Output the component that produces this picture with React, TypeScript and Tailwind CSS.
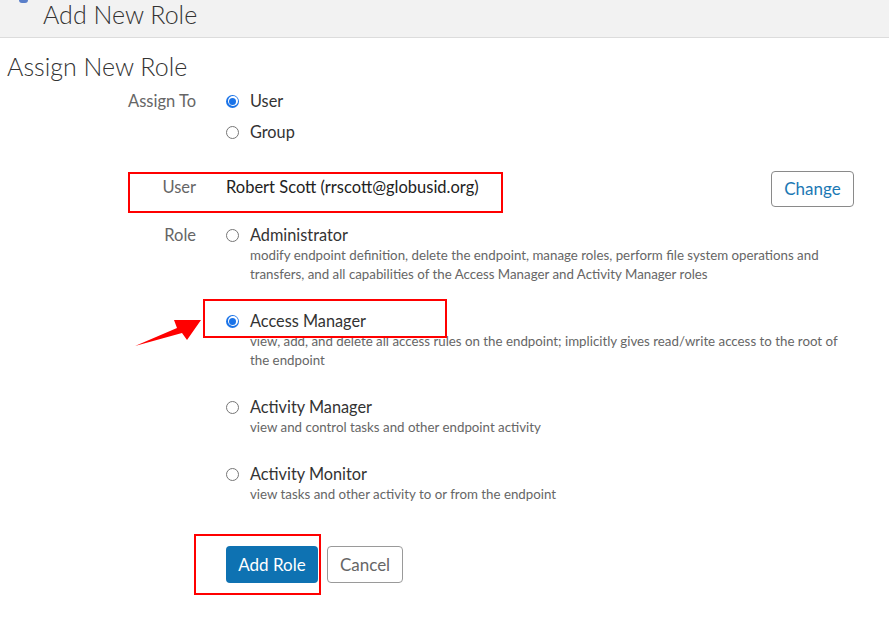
import React from "react";

const font = { fontFamily: "Lato, 'Open Sans', Arial, sans-serif" };

function Radio({ checked }: { checked?: boolean }) {
  if (checked) {
    return (
      <span className="flex h-[13px] w-[13px] shrink-0 items-center justify-center rounded-full bg-[#1a73e8]">
        <span className="flex h-[10px] w-[10px] items-center justify-center rounded-full bg-white">
          <span className="h-[7px] w-[7px] rounded-full bg-[#1a73e8]" />
        </span>
      </span>
    );
  }
  return <span className="h-[13px] w-[13px] shrink-0 rounded-full border border-[#767676] bg-white" />;
}

function RoleItem({
  title,
  desc,
  checked,
  children,
}: {
  title: string;
  desc: string;
  checked?: boolean;
  children?: React.ReactNode;
}) {
  return (
    <div className="relative">
      {children}
      <div className="flex h-[20px] items-center gap-[11px]">
        <Radio checked={checked} />
        <span className="text-[16.3px] leading-[20px] text-[#333]">{title}</span>
      </div>
      <p className="mt-[1px] pl-[24px] text-[13.3px] leading-[19px] text-[#666]">{desc}</p>
    </div>
  );
}

export default function App() {
  return (
    <div className="min-h-[618px] w-full bg-white" style={font}>
      <div className="flex h-[38px] items-start border-b border-[#dcdcdc] bg-[#f2f2f2] pl-[19px]">
        <span className="h-[3px] w-[9px] rounded-b-full bg-[#5a7fc9]" />
        <span className="ml-[15px] text-[25px] leading-[28px] font-light text-[#333]">Add New Role</span>
      </div>

      <h2 className="mt-[14px] pl-[7px] text-[25px] leading-[28px] font-light text-[#333]">Assign New Role</h2>

      <div className="mt-[11px] flex flex-col pr-[35px]">
        <div className="flex">
          <div className="w-[196px] text-right text-[16.5px] leading-[20px] text-[#666]">Assign To</div>
          <div className="ml-[30px] flex flex-col gap-[11px]">
            <div className="flex h-[20px] items-center gap-[11px]">
              <Radio checked />
              <span className="text-[16.3px] text-[#333]">User</span>
            </div>
            <div className="flex h-[20px] items-center gap-[11px]">
              <Radio />
              <span className="text-[16.3px] text-[#333]">Group</span>
            </div>
          </div>
        </div>

        <div className="relative mt-[29px] flex">
          <div className="pointer-events-none absolute left-[128px] top-[1px] h-[41px] w-[375px] border-2 border-[#ff0000]" />
          <div className="w-[196px] pt-[6px] text-right text-[16.5px] leading-[20px] text-[#666]">User</div>
          <div className="ml-[30px] flex flex-1 items-start justify-between">
            <span className="pt-[6px] text-[16.5px] leading-[20px] text-[#222]">Robert Scott (rrscott@globusid.org)</span>
            <button className="h-[36px] w-[83px] rounded-[4px] border border-[#8a8a8a] bg-white text-[17px] text-[#1b78b4]">
              Change
            </button>
          </div>
        </div>

        <div className="mt-[18px] flex">
          <div className="w-[196px] text-right text-[16.5px] leading-[20px] text-[#666]">Role</div>
          <div className="ml-[30px] flex flex-1 flex-col gap-[27px]">
            <RoleItem
              title="Administrator"
              desc="modify endpoint definition, delete the endpoint, manage roles, perform file system operations and transfers, and all capabilities of the Access Manager and Activity Manager roles"
            />
            <RoleItem
              checked
              title="Access Manager"
              desc="view, add, and delete all access rules on the endpoint; implicitly gives read/write access to the root of the endpoint"
            >
              <div className="pointer-events-none absolute left-[-23px] top-[-12px] h-[39px] w-[244px] border-2 border-[#ff0000]" />
              <svg
                className="pointer-events-none absolute left-[-96px] top-[4px]"
                width="75"
                height="35"
                viewBox="0 0 75 35"
              >
                <polygon points="5,31 47,13 44,5 71,5 57,25 52,18" fill="#ff0000" />
              </svg>
            </RoleItem>
            <RoleItem title="Activity Manager" desc="view and control tasks and other endpoint activity" />
            <RoleItem title="Activity Monitor" desc="view tasks and other activity to or from the endpoint" />
          </div>
        </div>

        <div className="relative ml-[226px] mt-[42px] flex gap-[9px]">
          <div className="pointer-events-none absolute left-[-32px] top-[-12px] h-[61px] w-[127px] border-2 border-[#ff0000]" />
          <button className="h-[37px] w-[92px] rounded-[4px] bg-[#0e72b2] text-[17px] text-white">Add Role</button>
          <button className="h-[37px] w-[76px] rounded-[4px] border border-[#9a9a9a] bg-white text-[17px] text-[#666]">
            Cancel
          </button>
        </div>
      </div>
    </div>
  );
}
